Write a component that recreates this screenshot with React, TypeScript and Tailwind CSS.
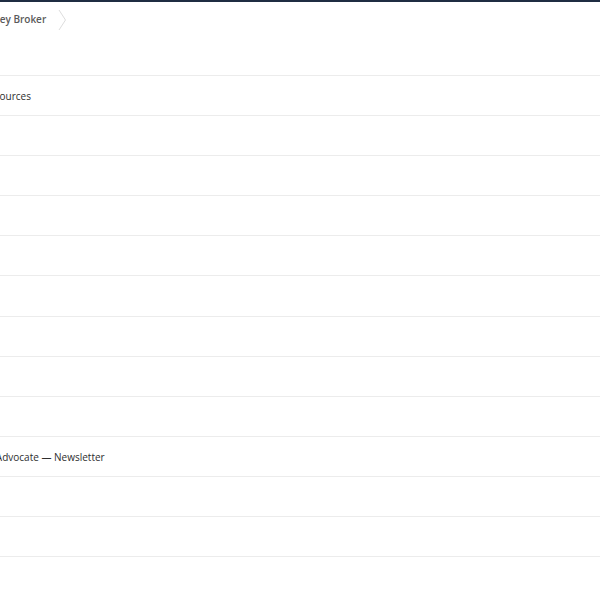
import React from "react";

const rows: { text: string; shift: string }[] = [
  { text: "Resources", shift: "-ml-[17px]" },
  { text: "", shift: "" },
  { text: "", shift: "" },
  { text: "", shift: "" },
  { text: "", shift: "" },
  { text: "", shift: "" },
  { text: "", shift: "" },
  { text: "", shift: "" },
  { text: "", shift: "" },
  { text: "The Advocate — Newsletter", shift: "-ml-[24px]" },
  { text: "", shift: "" },
  { text: "", shift: "" },
];

export default function App() {
  return (
    <div
      className="w-[600px] h-[600px] overflow-hidden bg-white"
      style={{ fontFamily: '"Open Sans", "Liberation Sans", sans-serif' }}
    >
      <div className="h-[2px] bg-[#1f2d42]" />
      <div className="h-[74px] border-b border-[#ececec] overflow-hidden">
        <div className="flex items-center h-[35px] -ml-[22px]">
          <span className="text-[10px] font-semibold text-[#5a5a5a] whitespace-nowrap">
            Money Broker
          </span>
          <svg width="9" height="22" viewBox="0 0 9 22" className="ml-[12px]">
            <path d="M1 1 L7.5 11 L1 21" fill="none" stroke="#dddddd" strokeWidth="1" />
          </svg>
        </div>
      </div>
      {rows.map((r, i) => (
        <div
          key={i}
          className="h-[40.1px] border-b border-[#ececec] flex items-center overflow-hidden pt-[2px]"
        >
          {r.text && (
            <span className={`text-[10px] text-[#2e2e2e] whitespace-nowrap ${r.shift}`}>
              {r.text}
            </span>
          )}
        </div>
      ))}
    </div>
  );
}
